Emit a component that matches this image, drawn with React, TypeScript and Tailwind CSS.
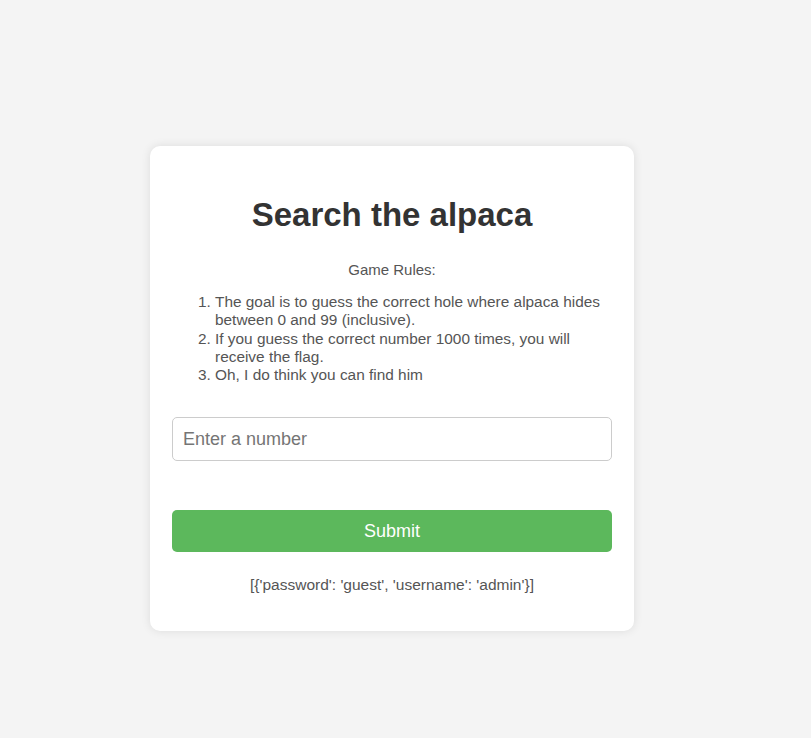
export default function App() {
  const rules = [
    'The goal is to guess the correct hole where alpaca hides between 0 and 99 (inclusive).',
    'If you guess the correct number 1000 times, you will receive the flag.',
    'Oh, I do think you can find him',
  ];

  return (
    <div className="min-h-screen bg-[#f4f4f4] pl-[150px] pt-[146px] font-['Liberation_Sans',Arial,sans-serif]">
      {/* ── Card ─────────────────────────────────────────────── */}
      <div className="w-[484px] rounded-[10px] bg-white px-[22px] pt-[50px] pb-[37px] shadow-[0_0_10px_rgba(0,0,0,0.1)]">
        <h1 className="text-center text-[33px] font-bold leading-[38px] text-[#333]">Search the alpaca</h1>

        <p className="mt-[27px] text-center text-[15px] leading-[18px] text-[#555]">Game Rules:</p>

        <ol className="mt-[14px] list-decimal pl-[43px] text-[15.4px] leading-[18.3px] text-[#555]">
          {rules.map((r) => (
            <li key={r}>{r}</li>
          ))}
        </ol>

        <form className="mt-[33px] flex flex-col" onSubmit={(e) => e.preventDefault()}>
          <input
            type="text"
            placeholder="Enter a number"
            className="h-[44px] w-full rounded-[5px] border border-[#ccc] px-[10px] text-[18px] text-[#333] outline-none placeholder:text-[#757575]"
          />
          <button
            type="submit"
            className="mt-[49px] h-[42px] w-full rounded-[5px] bg-[#5cb85c] text-[18px] text-white"
          >
            Submit
          </button>
        </form>

        <p className="mt-[24px] text-center text-[15.5px] leading-[18px] text-[#555]">
          [{"{"}'password': 'guest', 'username': 'admin'{"}"}]
        </p>
      </div>
    </div>
  );
}
